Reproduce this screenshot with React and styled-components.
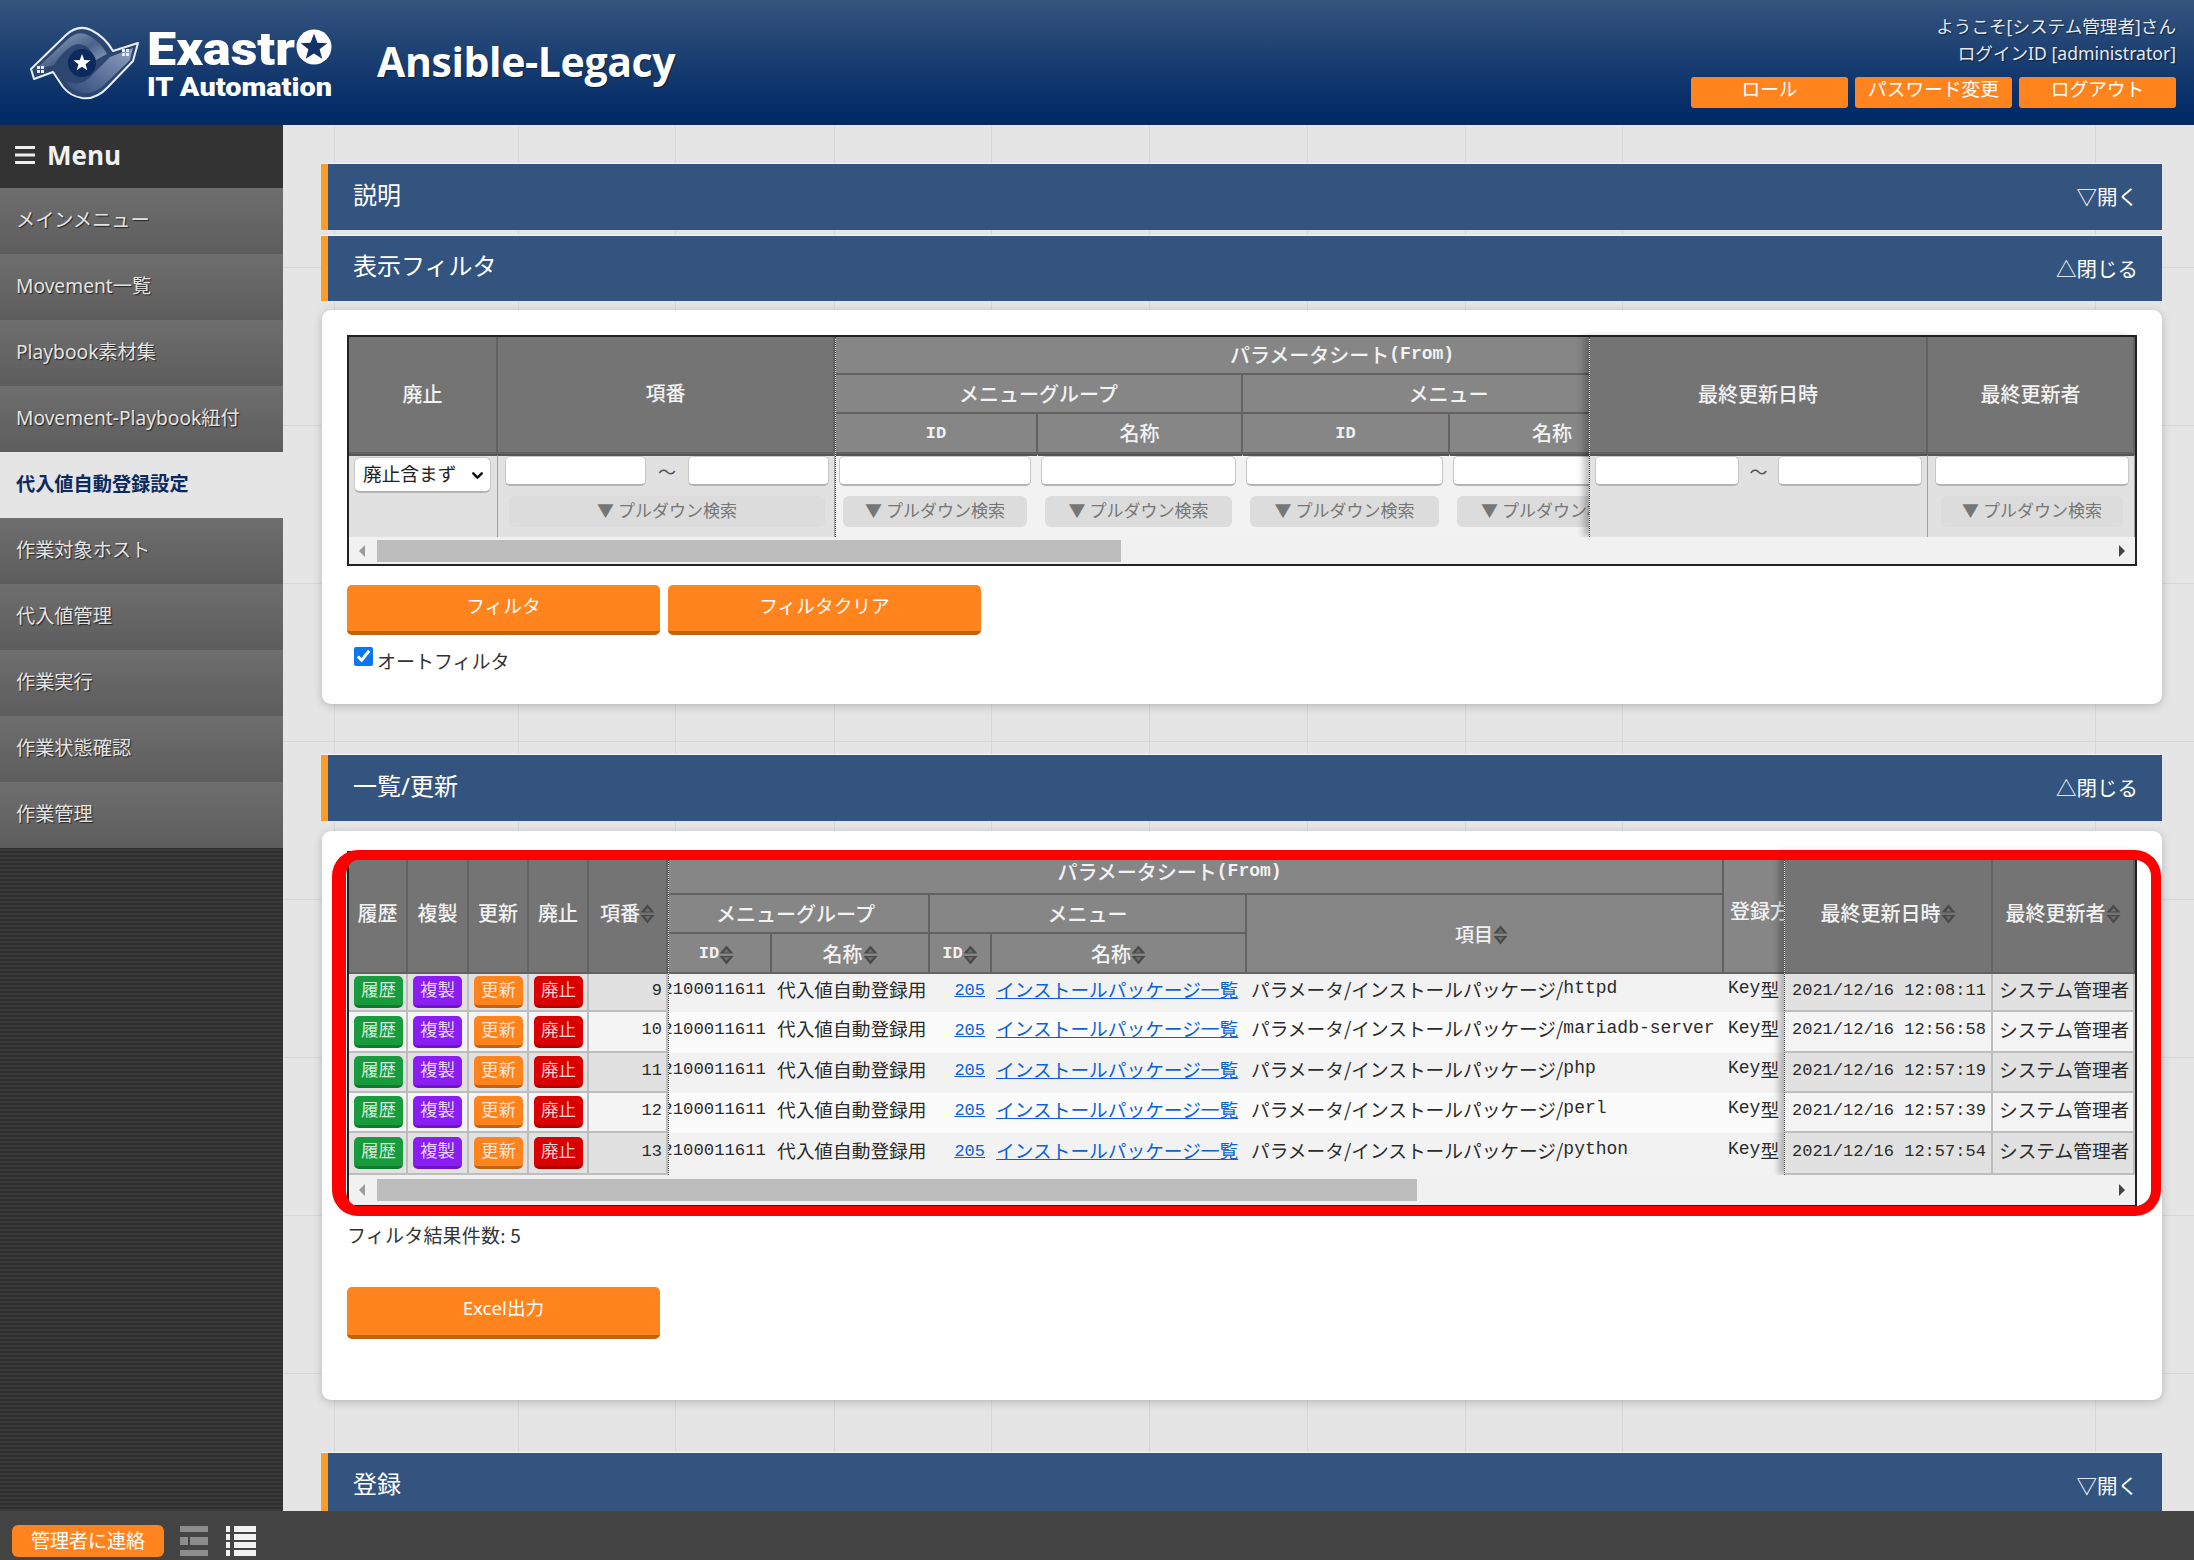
import React from "react";
import styled, { createGlobalStyle } from "styled-components";
import { ChevronDown } from "lucide-react";

const SANS = `"Noto Sans", "Noto Sans CJK JP", sans-serif`;
const CJK = `"Noto Sans CJK JP", sans-serif`;
const MONO = `"Liberation Mono", "Noto Sans CJK JP", monospace`;
const ORANGE = "#ff841e";

const gridXs = [51, 235, 392, 551, 708, 866, 1024, 1182, 1339, 1812];
const gridImages = gridXs.map(() => "linear-gradient(#d8d8d8,#d8d8d8)").join(",");
const gridSizes = gridXs.map(() => "1px 100%").join(",");
const gridPositions = gridXs.map((x) => `${x}px 0`).join(",");

const Global = createGlobalStyle`
  html, body { margin: 0; padding: 0; height: 100%; overflow: hidden; }
  body { font-family: ${SANS}; font-size: 18.7px; color: #333; background: #e5e5e5; }
  * { box-sizing: border-box; }
`;

const Page = styled.div`
  width: 2194px;
  height: 1560px;
  display: flex;
  flex-direction: column;
  overflow: hidden;
`;

const Header = styled.header`
  flex: 0 0 125px;
  display: flex;
  align-items: flex-start;
  justify-content: space-between;
  background: linear-gradient(#34547e, #022a66 92%);
  border-bottom: 1px solid #0a2a5c;
`;

const Brand = styled.div`
  display: flex;
  align-items: flex-start;
  padding: 15px 0 0 20px;
`;

const AppName = styled.div`
  margin: 23px 0 0 27px;
  font: 700 41px/46px "Open Sans", sans-serif;
  letter-spacing: -0.4px;
  color: #fff;
  text-shadow: 1px 1px 1px rgba(0, 0, 0, 0.4);
`;

const UserBox = styled.div`
  padding: 13px 18px 0 0;
  display: flex;
  flex-direction: column;
  align-items: flex-end;
`;

const UserLine = styled.div`
  font-size: 17.6px;
  line-height: 26px;
  height: 27px;
  color: #e6e9ef;
  text-shadow: 1px 1px 1px rgba(0, 0, 0, 0.5);
`;

const UserButtons = styled.div`
  display: flex;
  gap: 7px;
  margin-top: 10px;
`;

const UserButton = styled.div`
  width: 157px;
  height: 31px;
  border-radius: 3px;
  background: ${ORANGE};
  color: #fff;
  text-align: center;
  font-size: 18.7px;
  line-height: 24px;
`;

const Body = styled.div`
  flex: 1;
  min-height: 0;
  display: flex;
`;

const Sidebar = styled.nav`
  flex: 0 0 283px;
  display: flex;
  flex-direction: column;
  background: repeating-linear-gradient(#3a3a3a 0 2px, #2f2f2f 2px 4px);
`;

const MenuTitle = styled.div`
  height: 63px;
  background: #333;
  display: flex;
  align-items: center;
  gap: 12px;
  padding: 0 0 4px 15px;
  color: #f2f2f2;
  font: 700 26px/1 "Open Sans", sans-serif;
`;

const MenuItem = styled.div`
  height: 66px;
  display: flex;
  align-items: center;
  padding: 0 0 5px 16px;
  font-size: 19.2px;
  ${(p) =>
    p.$active
      ? `background:#e5e5e5;color:#0b2a60;font-weight:700;`
      : `background:linear-gradient(#6e6e6e,#5d5d5d);color:#e4e4e4;text-shadow:1px 1px 1px #222;`}
`;

const Content = styled.main`
  flex: 1;
  min-width: 0;
  overflow: hidden;
  padding: 39px 32px 0 38px;
  background-color: #e5e5e5;
  background-image: ${gridImages}, repeating-linear-gradient(transparent 0 142px, #d8d8d8 142px 143px, transparent 143px 158px);
  background-size: ${gridSizes}, 100% 100%;
  background-position: ${gridPositions}, 0 0;
  background-repeat: no-repeat;
`;

const SectionBar = styled.div`
  height: ${(p) => p.$h || 66}px;
  margin-top: ${(p) => p.$mt || 0}px;
  display: flex;
  align-items: center;
  justify-content: space-between;
  padding: 0 24px 2px 25px;
  border-left: 7px solid #ff9c26;
  background: #33547f;
  color: #fff;
  box-shadow: 0 -1px 0 #f4f4f4;
`;

const SectionTitle = styled.div`
  font-size: 24px;
  margin-bottom: 6px;
`;

const SectionToggle = styled.div`
  font-size: 20.5px;
`;

const Panel = styled.section`
  position: relative;
  margin: ${(p) => p.$mt}px 0 0 1px;
  height: ${(p) => p.$h}px;
  padding: ${(p) => p.$pt}px 25px 0;
  background: #fff;
  border-radius: 9px;
  box-shadow: 0 2px 10px rgba(0, 0, 0, 0.2);
`;

const Frame = styled.div`
  width: 1790px;
  height: ${(p) => p.$h}px;
  border: 2px solid #222;
  display: flex;
  flex-direction: column;
  background: #f4f4f4;
`;

const Panes = styled.div`
  flex: 1;
  min-height: 0;
  display: flex;
`;

const Pane = styled.div`
  flex: 0 0 ${(p) => p.$w}px;
  display: grid;
  grid-template-columns: ${(p) => p.$cols};
  grid-template-rows: ${(p) => p.$rows};
  position: relative;
  z-index: 1;
  ${(p) => (p.$side === "right" ? `box-shadow:-5px 0 7px rgba(0,0,0,.28);border-left:1px dotted #444;` : "")}
  ${(p) => (p.$side === "left" ? `border-right:1px dotted #444;` : "")}
`;

const ClipPane = styled.div`
  flex: 1;
  min-width: 0;
  overflow: hidden;
`;

const ClipGrid = styled.div`
  width: ${(p) => p.$w}px;
  display: grid;
  grid-template-columns: ${(p) => p.$cols};
  grid-template-rows: ${(p) => p.$rows};
`;

const Head = styled.div`
  grid-column: ${(p) => p.$c || "auto"};
  grid-row: ${(p) => p.$r || "auto"};
  display: flex;
  align-items: center;
  justify-content: ${(p) => (p.$start ? "flex-start" : "center")};
  white-space: nowrap;
  overflow: hidden;
  background: ${(p) => (p.$dark ? "#747474" : "#868686")};
  border-right: 2px solid #626262;
  border-bottom: 2px solid #626262;
  color: #f2f2f2;
  font-family: ${CJK};
  font-size: ${(p) => p.$fs || 20}px;
  font-weight: 500;
  padding: 0 ${(p) => p.$pr || 0}px ${(p) => p.$pb || 0}px ${(p) => p.$pl || 0}px;
`;

const HeadMono = styled.span`
  font: 700 ${(p) => p.$fs || 17}px ${MONO};
`;

const FilterCell = styled.div`
  position: relative;
  background: ${(p) => (p.$dark ? "#e1e1e1" : "#f2f2f2")};
  border-right: 1px solid ${(p) => (p.$dark ? "#a0a0a0" : "transparent")};
  border-top: 2px solid #555;
  padding: ${(p) => p.$pad || "0 4px"};
  display: flex;
  flex-direction: column;
  gap: 10px;
`;

const RangeRow = styled.div`
  display: flex;
  align-items: center;
  justify-content: space-between;
`;

const Tilde = styled.span`
  color: #555;
  font-size: 18px;
`;

const TextBox = styled.div`
  height: 30px;
  flex: 0 0 ${(p) => (p.$w ? `${p.$w}px` : "auto")};
  background: #fff;
  border: 1px solid #c8c8c8;
  border-bottom: 2px solid #b4b4b4;
  border-radius: 5px;
`;

const PullDown = styled.div`
  height: 31px;
  margin: 0 ${(p) => p.$inset || 4}px;
  background: #dcdcdc;
  border-radius: 6px;
  color: #767676;
  font-family: ${CJK};
  font-size: 17px;
  line-height: 28px;
  text-align: center;
  white-space: nowrap;
  overflow: hidden;
`;

const SelectWrap = styled.div`
  position: relative;
  width: 137px;
  height: 36px;
  margin: 1px 0 0 1px;
`;

const Select = styled.select`
  appearance: none;
  width: 100%;
  height: 100%;
  padding: 0 20px 4px 8px;
  background: #fff;
  border: 1px solid #c8c8c8;
  border-bottom: 2px solid #b4b4b4;
  border-radius: 6px;
  font-family: ${CJK};
  font-size: 18.7px;
  color: #222;
`;

const SelectArrow = styled.span`
  position: absolute;
  right: 5px;
  top: 10px;
  display: flex;
  color: #111;
  pointer-events: none;
`;

const ScrollBar = styled.div`
  flex: 0 0 ${(p) => p.$h}px;
  display: flex;
  align-items: center;
  background: #f1f1f1;
  padding: 0 10px;
  position: relative;
  z-index: 2;
`;

const ScrollThumb = styled.div`
  height: 22px;
  width: ${(p) => p.$w}px;
  margin-left: 12px;
  margin-right: auto;
  background: #bcbcbc;
`;

const Arrow = styled.span`
  width: 0;
  height: 0;
  border-top: 6px solid transparent;
  border-bottom: 6px solid transparent;
  ${(p) => (p.$dir === "l" ? "border-right: 6px solid #9a9a9a;" : "border-left: 6px solid #444;")}
`;

const ButtonRow = styled.div`
  display: flex;
  gap: 8px;
  margin-top: ${(p) => p.$mt}px;
`;

const BigButton = styled.div`
  width: 313px;
  height: ${(p) => p.$h || 50}px;
  border-radius: 5px;
  background: ${ORANGE};
  border-bottom: 4px solid #c4630f;
  color: #fff;
  text-align: center;
  font-size: 18.7px;
  line-height: 42px;
`;

const AutoFilter = styled.label`
  display: flex;
  align-items: flex-start;
  margin: 11px 0 0 7px;
  font-family: ${CJK};
  font-size: 19px;
  line-height: 30px;
  color: #333;
`;

const Check = styled.input`
  width: 19px;
  height: 19px;
  margin: 1px 4px 0 0;
  accent-color: #0a76f0;
`;

const BodyCell = styled.div`
  background: ${(p) => p.$bg};
  display: flex;
  align-items: center;
  justify-content: ${(p) => p.$justify || "flex-start"};
  padding: 0 ${(p) => p.$pr ?? 4}px ${(p) => p.$pb ?? 10}px ${(p) => p.$pl ?? 4}px;
  white-space: nowrap;
  overflow: hidden;
  font-family: ${CJK};
  font-size: 18.7px;
  color: #2b2b2b;
  ${(p) => (p.$fixed ? "border-right:2px solid #bdbdbd;border-bottom:2px solid #bdbdbd;" : "")}
`;

const Mono = styled.span`
  font-family: ${MONO};
  font-size: ${(p) => p.$fs || 17}px;
`;

const Link = styled.a`
  color: #0b62d6;
  text-decoration: underline;
`;

const RowButton = styled.div`
  width: 49px;
  height: 32px;
  margin-left: 4px;
  border-radius: 5px;
  background: ${(p) => p.$bg};
  border-bottom: 3px solid ${(p) => p.$edge};
  color: rgba(255, 255, 255, 0.82);
  font-family: ${CJK};
  font-size: 17.5px;
  line-height: 25px;
  text-align: center;
`;

const RedMark = styled.div`
  position: absolute;
  left: 10px;
  top: 19px;
  width: 1829px;
  height: 366px;
  border: 10px solid #f00;
  border-left-width: 14px;
  border-radius: 26px;
  z-index: 5;
  pointer-events: none;
`;

const ResultCount = styled.div`
  margin-top: 14px;
  font-family: ${CJK};
  font-size: 19px;
  letter-spacing: 0.2px;
  line-height: 28px;
  color: #333;
`;

const Footer = styled.footer`
  flex: 0 0 49px;
  background: #444;
  display: flex;
  align-items: center;
  padding: 11px 0 0 12px;
`;

const ContactButton = styled.div`
  width: 152px;
  height: 32px;
  border-radius: 6px;
  background: ${ORANGE};
  color: #fff;
  font-family: ${CJK};
  font-size: 19px;
  line-height: 29px;
  text-align: center;
  margin-right: 16px;
`;

const IconGap = styled.span`
  display: inline-flex;
  margin-right: ${(p) => p.$mr}px;
`;

const SortMark = styled.svg`
  flex: none;
  margin-top: 3px;
`;

function Sort() {
  return (
    <SortMark width="15" height="20" viewBox="0 0 15 20">
      <path d="M7.5 0.5 L14.5 8.5 L0.5 8.5 Z" fill="#4a4a4a" />
      <path d="M7.5 19.5 L14.5 11 L0.5 11 Z" fill="#4a4a4a" />
      <path d="M7.5 4 L10.5 7.4 L4.5 7.4 Z" fill="#6e6e6e" />
      <path d="M7.5 16 L10.5 12.2 L4.5 12.2 Z" fill="#6e6e6e" />
    </SortMark>
  );
}

const STAR = (cx, cy, R) => {
  const pts = [];
  for (let i = 0; i < 10; i++) {
    const r = i % 2 === 0 ? R : R * 0.42;
    const a = (-90 + i * 36) * (Math.PI / 180);
    pts.push(`${(cx + r * Math.cos(a)).toFixed(2)},${(cy + r * Math.sin(a)).toFixed(2)}`);
  }
  return pts.join(" ");
};

function Win({ x, y }) {
  return (
    <g fill="#e8ecf4">
      <rect x={x} y={y} width="3" height="3" />
      <rect x={x + 4} y={y} width="3" height="3" />
      <rect x={x} y={y + 4} width="3" height="3" />
      <rect x={x + 4} y={y + 4} width="3" height="3" />
    </g>
  );
}

function Logo() {
  return (
    <svg width="330" height="95" viewBox="0 0 330 95">
      <defs>
        <linearGradient id="lgA" x1="0" y1="0" x2="1" y2="1">
          <stop offset="0" stopColor="#9fb0cb" />
          <stop offset="0.55" stopColor="#4a628c" />
          <stop offset="1" stopColor="#9fb0cb" />
        </linearGradient>
        <linearGradient id="lgB" x1="1" y1="0" x2="0" y2="1">
          <stop offset="0" stopColor="#8fa1bf" />
          <stop offset="1" stopColor="#30497a" />
        </linearGradient>
      </defs>
      <path
        d="M11 54 L46 20 Q58 9 71 15 Q85 22 93 36 L118 28 L113 46 L88 72 Q76 85 62 83 Q50 81 43 72 L33 57 L14 64 Z"
        fill="#2c4670"
        stroke="#e9edf4"
        strokeWidth="2"
        strokeLinejoin="round"
      />
      <path d="M15 55 L48 24 Q58 15 68 20 Q80 26 87 39 L74 46 Q72 30 58 29 Q46 31 34 50 Z" fill="url(#lgA)" />
      <path d="M113 33 L110 45 L86 68 Q75 80 62 78 Q51 76 46 66 Q62 74 75 57 L90 42 Z" fill="url(#lgB)" />
      <circle cx="62" cy="48" r="14" fill="#0c2a5e" />
      <polygon points={STAR(62, 48, 9)} fill="#fff" />
      <Win x={17} y={51} />
      <Win x={102} y={34} />
      <text
        x="127"
        y="50"
        fill="#fff"
        fontFamily="Roboto, sans-serif"
        fontWeight="900"
        fontSize="46"
        textLength="148"
        lengthAdjust="spacingAndGlyphs"
      >
        Exastr
      </text>
      <circle cx="294" cy="32" r="17.5" fill="#fff" />
      <polygon points={STAR(294, 32.5, 14)} fill="#12326a" />
      <text
        x="127"
        y="81"
        fill="#fff"
        fontFamily="Roboto, sans-serif"
        fontWeight="900"
        fontSize="26"
        textLength="185"
        lengthAdjust="spacingAndGlyphs"
      >
        IT Automation
      </text>
    </svg>
  );
}

function Hamburger() {
  return (
    <svg width="20" height="20" viewBox="0 0 20 20">
      <path d="M0 1 H20 V4 H0 Z M0 8.5 H20 V11.5 H0 Z M0 16 H20 V19 H0 Z" fill="#eee" />
    </svg>
  );
}

function LayoutIcon() {
  return (
    <svg width="28" height="30" viewBox="0 0 28 30">
      <path d="M0 0 H28 V6 H0 Z M0 24 H28 V30 H0 Z M0 11 H8 V19 H0 Z M10 11 H28 V19 H10 Z" fill="#8c8c8c" />
    </svg>
  );
}

function ListIcon() {
  return (
    <svg width="30" height="30" viewBox="0 0 30 30">
      <path
        d="M0 0 H4 V6 H0 Z M8 0 H30 V6 H8 Z M0 8 H4 V14 H0 Z M8 8 H30 V14 H8 Z M0 16 H4 V22 H0 Z M8 16 H30 V22 H8 Z M0 24 H4 V30 H0 Z M8 24 H30 V30 H8 Z"
        fill="#f2f2f2"
      />
    </svg>
  );
}

const MENU = [
  "メインメニュー",
  "Movement一覧",
  "Playbook素材集",
  "Movement-Playbook紐付",
  "代入値自動登録設定",
  "作業対象ホスト",
  "代入値管理",
  "作業実行",
  "作業状態確認",
  "作業管理",
];

const PD = "▼ プルダウン検索";

const ROWS = [
  { no: 9, item: "httpd", at: "12:08:11", h: 38 },
  { no: 10, item: "mariadb-server", at: "12:56:58", h: 41 },
  { no: 11, item: "php", at: "12:57:19", h: 40 },
  { no: 12, item: "perl", at: "12:57:39", h: 40 },
  { no: 13, item: "python", at: "12:57:54", h: 42 },
];

const ACTIONS = [
  { t: "履歴", bg: "#189b3c", edge: "#0f7a2c" },
  { t: "複製", bg: "#8a1ef2", edge: "#6f14c8" },
  { t: "更新", bg: "#ff841e", edge: "#c4630f" },
  { t: "廃止", bg: "#da0000", edge: "#b00000" },
];

const listRows = `42px 39px 40px ${ROWS.map((r) => `${r.h}px`).join(" ")}`;

function FilterTable() {
  return (
    <Frame $h={231}>
      <Panes>
        <Pane $side="left" $w={486} $cols="149px 337px" $rows="117px 83px">
          <Head $dark $pb={3}>廃止</Head>
          <Head $dark $pb={4}>項番</Head>
          <FilterCell $dark $pad="0 4px">
            <SelectWrap>
              <Select defaultValue="a">
                <option value="a">廃止含まず</option>
              </Select>
              <SelectArrow>
                <ChevronDown size={17} strokeWidth={3.4} />
              </SelectArrow>
            </SelectWrap>
          </FilterCell>
          <FilterCell $dark $pad="0 5px 0 7px">
            <RangeRow>
              <TextBox $w={141} />
              <Tilde>～</Tilde>
              <TextBox $w={141} />
            </RangeRow>
            <PullDown>{PD}</PullDown>
          </FilterCell>
        </Pane>
        <ClipPane>
          <ClipGrid $w={1014} $cols="202px 205px 207px 206px 194px" $rows="38px 39px 40px 83px">
            <Head $c="1 / span 5" $fs={20} $pb={2}>
              パラメータシート<HeadMono $fs={18}>(From)</HeadMono>
            </Head>
            <Head $c="1 / span 2">メニューグループ</Head>
            <Head $c="3 / span 2">メニュー</Head>
            <Head $c="5" $r="2 / span 2" />
            <Head $c="1">
              <HeadMono>ID</HeadMono>
            </Head>
            <Head $c="2" $pb={2}>名称</Head>
            <Head $c="3">
              <HeadMono>ID</HeadMono>
            </Head>
            <Head $c="4" $pb={2}>名称</Head>
            {[0, 1, 2, 3].map((i) => (
              <FilterCell key={i} $pad="0 6px 0 3px">
                <TextBox />
                <PullDown>{PD}</PullDown>
              </FilterCell>
            ))}
            <FilterCell />
          </ClipGrid>
        </ClipPane>
        <Pane $side="right" $w={545} $cols="338px 207px" $rows="117px 83px">
          <Head $dark $pb={3}>最終更新日時</Head>
          <Head $dark $pb={3}>最終更新者</Head>
          <FilterCell $dark $pad="0 5px 0 5px">
            <RangeRow>
              <TextBox $w={144} />
              <Tilde>～</Tilde>
              <TextBox $w={144} />
            </RangeRow>
          </FilterCell>
          <FilterCell $dark $pad="0 5px 0 7px">
            <TextBox />
            <PullDown $inset={6}>{PD}</PullDown>
          </FilterCell>
        </Pane>
      </Panes>
      <ScrollBar $h={27}>
        <Arrow $dir="l" />
        <ScrollThumb $w={744} />
        <Arrow $dir="r" />
      </ScrollBar>
    </Frame>
  );
}

function ListTable() {
  return (
    <Frame $h={356}>
      <Panes>
        <Pane $side="left" $w={319} $cols="59px 61px 60px 60px 79px" $rows={`121px ${ROWS.map((r) => `${r.h}px`).join(" ")}`}>
          <Head $dark>履歴</Head>
          <Head $dark>複製</Head>
          <Head $dark>更新</Head>
          <Head $dark>廃止</Head>
          <Head $dark>
            項番
            <Sort />
          </Head>
          {ROWS.map((r, i) => (
            <React.Fragment key={r.no}>
              {ACTIONS.map((a) => (
                <BodyCell key={a.t} $fixed $bg={i % 2 ? "#f4f4f4" : "#e1e1e1"} $pl={1} $pr={0} $pb={0}>
                  <RowButton $bg={a.bg} $edge={a.edge}>
                    {a.t}
                  </RowButton>
                </BodyCell>
              ))}
              <BodyCell $fixed $bg={i % 2 ? "#f4f4f4" : "#e1e1e1"} $justify="flex-end" $pr={4} $pb={4}>
                <Mono>{r.no}</Mono>
              </BodyCell>
            </React.Fragment>
          ))}
        </Pane>
        <ClipPane>
          <ClipGrid $w={1161} $cols="103px 158px 62px 255px 477px 106px" $rows={listRows}>
            <Head $c="1 / span 5" $fs={20} $pb={4} $pr={52}>
              パラメータシート<HeadMono $fs={18}>(From)</HeadMono>
            </Head>
            <Head $c="6" $r="1 / span 3" $pb={4} $pl={6} $start>
              登録方式
              <Sort />
            </Head>
            <Head $c="1 / span 2" $r="2" $pr={6}>メニューグループ</Head>
            <Head $c="3 / span 2" $r="2">メニュー</Head>
            <Head $c="5" $r="2 / span 2" $fs={19} $pr={6}>
              項目
              <Sort />
            </Head>
            <Head $c="1" $r="3" $pr={6}>
              <HeadMono>ID</HeadMono>
              <Sort />
            </Head>
            <Head $c="2" $r="3">
              名称
              <Sort />
            </Head>
            <Head $c="3" $r="3">
              <HeadMono>ID</HeadMono>
              <Sort />
            </Head>
            <Head $c="4" $r="3">
              名称
              <Sort />
            </Head>
            {ROWS.map((r, i) => {
              const bg = i % 2 ? "#fbfbfb" : "#f2f2f2";
              return (
                <React.Fragment key={r.no}>
                  <BodyCell $bg={bg} $justify="flex-end" $pl={0} $pr={6} $pb={7}>
                    <Mono $fs={17.3}>2100011611</Mono>
                  </BodyCell>
                  <BodyCell $bg={bg} $pl={5}>代入値自動登録用</BodyCell>
                  <BodyCell $bg={bg} $justify="flex-end" $pr={7} $pb={13}>
                    <Link>
                      <Mono>205</Mono>
                    </Link>
                  </BodyCell>
                  <BodyCell $bg={bg} $pl={4}>
                    <Link>インストールパッケージ一覧</Link>
                  </BodyCell>
                  <BodyCell $bg={bg}>
                    パラメータ/インストールパッケージ/<Mono $fs={18}>{r.item}</Mono>
                  </BodyCell>
                  <BodyCell $bg={bg}>
                    <Mono $fs={18}>Key</Mono>型
                  </BodyCell>
                </React.Fragment>
              );
            })}
          </ClipGrid>
        </ClipPane>
        <Pane $side="right" $w={350} $cols="208px 142px" $rows={`121px ${ROWS.map((r) => `${r.h}px`).join(" ")}`}>
          <Head $dark>
            最終更新日時
            <Sort />
          </Head>
          <Head $dark>
            最終更新者
            <Sort />
          </Head>
          {ROWS.map((r, i) => (
            <React.Fragment key={r.no}>
              <BodyCell $fixed $bg={i % 2 ? "#f4f4f4" : "#e1e1e1"} $pl={7} $pr={0} $pb={4}>
                <Mono>2021/12/16 {r.at}</Mono>
              </BodyCell>
              <BodyCell $fixed $bg={i % 2 ? "#f4f4f4" : "#e1e1e1"} $pl={6} $pr={0} $pb={7}>
                システム管理者
              </BodyCell>
            </React.Fragment>
          ))}
        </Pane>
      </Panes>
      <ScrollBar $h={30}>
        <Arrow $dir="l" />
        <ScrollThumb $w={1040} />
        <Arrow $dir="r" />
      </ScrollBar>
    </Frame>
  );
}

export default function App() {
  return (
    <Page>
      <Global />
      <Header>
        <Brand>
          <Logo />
          <AppName>Ansible-Legacy</AppName>
        </Brand>
        <UserBox>
          <UserLine>ようこそ[システム管理者]さん</UserLine>
          <UserLine>ログインID [administrator]</UserLine>
          <UserButtons>
            <UserButton>ロール</UserButton>
            <UserButton>パスワード変更</UserButton>
            <UserButton>ログアウト</UserButton>
          </UserButtons>
        </UserBox>
      </Header>
      <Body>
        <Sidebar>
          <MenuTitle>
            <Hamburger />
            Menu
          </MenuTitle>
          {MENU.map((m, i) => (
            <MenuItem key={m} $active={i === 4}>
              {m}
            </MenuItem>
          ))}
        </Sidebar>
        <Content>
          <SectionBar>
            <SectionTitle>説明</SectionTitle>
            <SectionToggle>▽開く</SectionToggle>
          </SectionBar>
          <SectionBar $mt={6} $h={65}>
            <SectionTitle>表示フィルタ</SectionTitle>
            <SectionToggle>△閉じる</SectionToggle>
          </SectionBar>
          <Panel $mt={9} $h={394} $pt={25}>
            <FilterTable />
            <ButtonRow $mt={19}>
              <BigButton>フィルタ</BigButton>
              <BigButton>フィルタクリア</BigButton>
            </ButtonRow>
            <AutoFilter>
              <Check type="checkbox" defaultChecked />
              オートフィルタ
            </AutoFilter>
          </Panel>
          <SectionBar $mt={51}>
            <SectionTitle>一覧/更新</SectionTitle>
            <SectionToggle>△閉じる</SectionToggle>
          </SectionBar>
          <Panel $mt={10} $h={569} $pt={20}>
            <ListTable />
            <RedMark />
            <ResultCount>フィルタ結果件数: 5</ResultCount>
            <ButtonRow $mt={38}>
              <BigButton $h={52}>Excel出力</BigButton>
            </ButtonRow>
          </Panel>
          <SectionBar $mt={53}>
            <SectionTitle>登録</SectionTitle>
            <SectionToggle>▽開く</SectionToggle>
          </SectionBar>
        </Content>
      </Body>
      <Footer>
        <ContactButton>管理者に連絡</ContactButton>
        <IconGap $mr={18}>
          <LayoutIcon />
        </IconGap>
        <IconGap $mr={0}>
          <ListIcon />
        </IconGap>
      </Footer>
    </Page>
  );
}
